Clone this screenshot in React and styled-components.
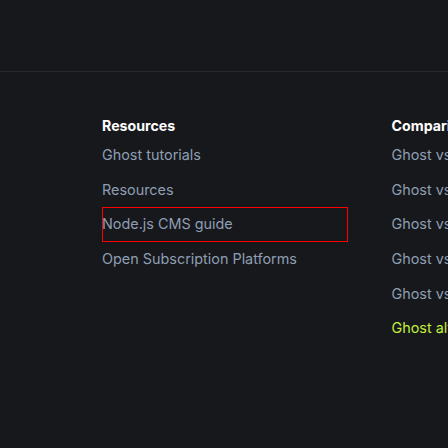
import React from "react";
import styled, { createGlobalStyle } from "styled-components";

const Global = createGlobalStyle`
  html, body {
    margin: 0;
    padding: 0;
    background: #17181c;
    overflow: hidden;
  }
  body {
    font-family: Inter, "Noto Sans", "Liberation Sans", sans-serif;
    -webkit-font-smoothing: antialiased;
  }
`;

const Page = styled.div`
  width: 448px;
  height: 448px;
  background: #17181c;
  overflow: hidden;
`;

const TopBar = styled.div`
  height: 71px;
`;

const Footer = styled.footer`
  border-top: 1px solid #262932;
  padding: 44.4px 0 0 102px;
  display: grid;
  grid-template-columns: 246px 246px;
  column-gap: 43.5px;
  align-items: start;
`;

const Column = styled.div`
  display: flex;
  flex-direction: column;
  min-width: 0;
`;

const Heading = styled.h4`
  margin: 0 0 1.7px;
  font-size: 14.2px;
  line-height: 20px;
  font-weight: 700;
  color: #ffffff;
  white-space: nowrap;
`;

const Link = styled.a`
  display: block;
  padding: 6.84px 0 7.83px;
  font-size: 14.4px;
  line-height: 20px;
  color: ${(p) => (p.$accent ? "#c3ee3c" : "#8e9eb2")};
  text-decoration: none;
  white-space: nowrap;
  outline: ${(p) => (p.$focused ? "1px solid #ff0000" : "none")};
  outline-offset: -1px;
`;

const data = [
  {
    title: "Resources",
    links: [
      { label: "Ghost tutorials" },
      { label: "Resources" },
      { label: "Node.js CMS guide", focused: true },
      { label: "Open Subscription Platforms" },
    ],
  },
  {
    title: "Comparisons",
    links: [
      { label: "Ghost vs WordPress" },
      { label: "Ghost vs Substack" },
      { label: "Ghost vs Medium" },
      { label: "Ghost vs Kit" },
      { label: "Ghost vs Beehiiv" },
      { label: "Ghost alternatives", accent: true },
    ],
  },
];

export default function App() {
  return (
    <Page>
      <Global />
      <TopBar />
      <Footer>
        {data.map((col) => (
          <Column key={col.title}>
            <Heading>{col.title}</Heading>
            {col.links.map((l) => (
              <Link key={l.label} href="#" $focused={l.focused} $accent={l.accent}>
                {l.label}
              </Link>
            ))}
          </Column>
        ))}
      </Footer>
    </Page>
  );
}
